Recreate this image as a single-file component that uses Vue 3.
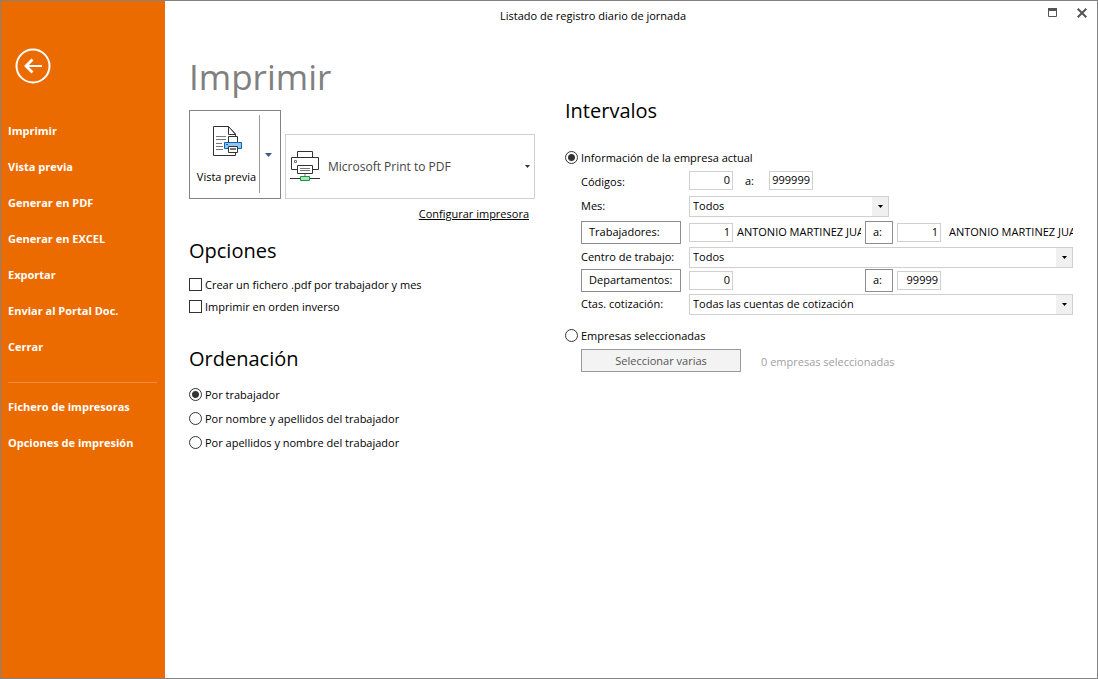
<script setup>
import { ref } from 'vue'

const mainMenu = ['Imprimir', 'Vista previa', 'Generar en PDF', 'Generar en EXCEL', 'Exportar', 'Enviar al Portal Doc.', 'Cerrar']
const extraMenu = ['Fichero de impresoras', 'Opciones de impresión']
const orders = ['Por trabajador', 'Por nombre y apellidos del trabajador', 'Por apellidos y nombre del trabajador']

const order = ref(0)
const scope = ref('actual')
const perWorkerPdf = ref(false)
const reverse = ref(false)
const codeFrom = ref('0')
const codeTo = ref('999999')
const workerFrom = ref('1')
const workerTo = ref('1')
const deptFrom = ref('0')
const deptTo = ref('99999')
</script>

<template>
  <div class="window">
    <nav class="sidebar">
      <button class="back" type="button" aria-label="Volver">
        <svg width="36" height="36" viewBox="0 0 36 36" fill="none" stroke="#fff">
          <circle cx="18" cy="18" r="16.5" stroke-width="2" />
          <path d="M27 18H11" stroke-width="2" />
          <path d="M17.500 11.500L11 18L17.500 24.500" stroke-width="2.8" />
        </svg>
      </button>
      <ul class="menu">
        <li v-for="m in mainMenu" :key="m"><a href="#">{{ m }}</a></li>
      </ul>
      <hr class="rule" />
      <ul class="menu">
        <li v-for="m in extraMenu" :key="m"><a href="#">{{ m }}</a></li>
      </ul>
    </nav>

    <div class="body">
      <header class="titlebar">
        <span class="caption">Listado de registro diario de jornada</span>
        <div class="winbuttons">
          <button type="button" aria-label="Maximizar">
            <svg width="9" height="9" viewBox="0 0 9 9"><path d="M.5 .5h8v8h-8z" fill="none" stroke="#555" /><path d="M0 0h9v3H0z" fill="#555" /></svg>
          </button>
          <button type="button" aria-label="Cerrar ventana">
            <svg width="10" height="10" viewBox="0 0 10 10"><path d="M.7 .7l8.600 8.600M9.300 .7L.7 9.300" stroke="#555" stroke-width="2" /></svg>
          </button>
        </div>
      </header>

      <main class="columns">
        <section class="left">
          <h1>Imprimir</h1>
          <div class="printrow">
            <div class="split">
              <button class="preview" type="button">
                <svg width="30" height="32" viewBox="0 0 30 32" fill="none">
                  <path d="M16.500 1.500h-15v29h22V9z" fill="#fff" stroke="#333" />
                  <path d="M16.500 1.500v8h7z" fill="#fff" stroke="#333" />
                  <path d="M4 11.500h10M4 14.500h10M4 18.500h6M4 21.500h7M4 24.500h7" stroke="#777" />
                  <path d="M16.500 11.500h9v7h-9z" fill="#fff" stroke="#333" />
                  <path d="M12.500 17.500h17v6h-17z" fill="#92c5f0" stroke="#0a63b0" />
                  <path d="M14 19.500h2" stroke="#0a63b0" />
                  <path d="M16.500 21.500h9v6h-9z" fill="#fff" stroke="#333" />
                  <path d="M18 24h6" stroke="#777" stroke-width="2" />
                </svg>
                <span>Vista previa</span>
              </button>
              <button class="drop" type="button" aria-label="Más opciones de vista previa">
                <svg width="7" height="4" viewBox="0 0 7 4"><path d="M0 0h7L3.500 4z" fill="#3f5a85" /></svg>
              </button>
            </div>
            <div class="printer">
              <svg class="printer-icon" width="30" height="32" viewBox="0 0 30 32" fill="none">
                <path d="M7.500 7.500v-6h15v6M7.500 19.500h-6v-12h27v12h-6" stroke="#333" />
                <path d="M4.500 10.500h2v2h-2z" stroke="#777" />
                <path d="M7.500 15.500h15v8h-15z" fill="#fff" stroke="#333" />
                <path d="M10 18.500h10M10 20.500h10M15 24v3" stroke="#777" />
                <path d="M0 28.500h30" stroke="#333" />
                <path d="M10.500 26.500h9v4h-9z" fill="#b5dfbf" stroke="#0f9a41" />
              </svg>
              <select aria-label="Impresora"><option>Microsoft Print to PDF</option></select>
              <svg class="printer-arrow" width="5" height="3" viewBox="0 0 5 3"><path d="M0 0h5L2.500 3z" fill="#333" /></svg>
            </div>
          </div>
          <a class="config" href="#">Configurar impresora</a>

          <h2 class="options-title">Opciones</h2>
          <div class="checks">
            <label><input v-model="perWorkerPdf" type="checkbox" />Crear un fichero .pdf por trabajador y mes</label>
            <label><input v-model="reverse" type="checkbox" />Imprimir en orden inverso</label>
          </div>

          <h2 class="order-title">Ordenación</h2>
          <div class="radios">
            <label v-for="(o, i) in orders" :key="o"><input v-model="order" type="radio" name="orden" :value="i" />{{ o }}</label>
          </div>
        </section>

        <section class="right">
          <h2>Intervalos</h2>
          <label class="scope"><input v-model="scope" type="radio" name="ambito" value="actual" />Información de la empresa actual</label>
          <div class="fields">
            <div class="field">
              <label for="code-from">Códigos:</label>
              <div class="codes">
                <input id="code-from" v-model="codeFrom" class="num" type="text" />
                <label for="code-to">a:</label>
                <input id="code-to" v-model="codeTo" class="num" type="text" />
              </div>
            </div>
            <div class="field">
              <label for="month">Mes:</label>
              <div class="combo short">
                <select id="month"><option>Todos</option></select>
                <span class="arrow"><svg width="5" height="3" viewBox="0 0 5 3"><path d="M0 0h5L2.500 3z" /></svg></span>
              </div>
            </div>
            <div class="field tall">
              <button type="button" class="box">Trabajadores:</button>
              <div class="range">
                <input v-model="workerFrom" class="num" type="text" aria-label="Trabajador inicial" />
                <span class="name">ANTONIO MARTINEZ JUAN</span>
                <button type="button" class="box to">a:</button>
                <input v-model="workerTo" class="num" type="text" aria-label="Trabajador final" />
                <span class="name last">ANTONIO MARTINEZ JUAN</span>
              </div>
            </div>
            <div class="field low">
              <label for="center">Centro de trabajo:</label>
              <div class="combo">
                <select id="center"><option>Todos</option></select>
                <span class="arrow"><svg width="5" height="3" viewBox="0 0 5 3"><path d="M0 0h5L2.500 3z" /></svg></span>
              </div>
            </div>
            <div class="field">
              <button type="button" class="box">Departamentos:</button>
              <div class="range">
                <input v-model="deptFrom" class="num" type="text" aria-label="Departamento inicial" />
                <span class="name"></span>
                <button type="button" class="box to">a:</button>
                <input v-model="deptTo" class="num" type="text" aria-label="Departamento final" />
                <span class="name last"></span>
              </div>
            </div>
            <div class="field">
              <label for="accounts">Ctas. cotización:</label>
              <div class="combo">
                <select id="accounts"><option>Todas las cuentas de cotización</option></select>
                <span class="arrow"><svg width="5" height="3" viewBox="0 0 5 3"><path d="M0 0h5L2.500 3z" /></svg></span>
              </div>
            </div>
          </div>
          <label class="scope second"><input v-model="scope" type="radio" name="ambito" value="varias" />Empresas seleccionadas</label>
          <div class="several">
            <button type="button" disabled>Seleccionar varias</button>
            <span>0 empresas seleccionadas</span>
          </div>
        </section>
      </main>
    </div>
  </div>
</template>

<style>
body { background: #fff; }
</style>

<style scoped>
.window, .window * { box-sizing: border-box; }
.window {
  display: flex;
  min-height: 100vh;
  border: 1px solid #838383;
  background: #fff;
  color: #000;
  font: 11px/16px "Open Sans", "Noto Sans", sans-serif;
}
button, input, select { font: inherit; color: inherit; margin: 0; }
button { padding: 0; background: none; border: 0; cursor: pointer; }
svg { display: block; }

.sidebar { flex: 0 0 164px; padding: 47px 8px 0 7px; background: #eb6b00; color: #fff; }
.back { display: block; margin-left: 7px; margin-bottom: 29px; }
.menu { list-style: none; margin: 0; padding: 0; }
.menu a { display: block; line-height: 36px; color: #fff; font-weight: 700; text-decoration: none; white-space: nowrap; }
.rule { height: 1px; margin: 17px 0 6px; border: 0; background: #f08c3a; }

.body { flex: 1; min-width: 0; }
.titlebar { display: flex; height: 30px; align-items: center; }
.caption { flex: 1; text-align: center; }
.winbuttons { display: flex; width: 76px; height: 30px; gap: 20px; padding: 7px 10px 0 27px; align-items: flex-start; }

.columns { display: flex; gap: 30px; padding: 0 24px; }
.left { flex: 0 0 346px; }
.right { flex: 1; min-width: 0; }
h1, h2 { margin: 0; font-weight: 400; }
h1 { padding-top: 18px; margin-bottom: 5px; font-size: 35px; line-height: 56px; color: #808080; }
h2 { font-size: 20px; line-height: 32px; }

.printrow { display: flex; gap: 4px; align-items: flex-end; }
.split { display: flex; width: 92px; height: 89px; border: 1px solid #838383; }
.preview { display: flex; flex: 1; flex-direction: column; align-items: center; justify-content: center; gap: 12px; padding-left: 4px; white-space: nowrap; }
.drop { display: flex; width: 21px; margin: 4px 0 5px; padding: 2px 4px 0 0; border-left: 1px solid #999; align-items: center; justify-content: center; }
.printer { position: relative; flex: 1; height: 65px; }
.printer select { width: 100%; height: 100%; padding: 0 20px 0 42px; appearance: none; border: 1px solid #d0d0d0; border-radius: 0; background: #fff; color: #444; font-size: 12px; }
.printer-icon { position: absolute; left: 5px; top: 16px; pointer-events: none; }
.printer-arrow { position: absolute; right: 5px; top: 31px; pointer-events: none; }
.config { display: block; margin-top: 5px; padding-right: 6px; text-align: right; line-height: 20px; color: #000; }

.options-title { margin-top: 11px; }
.checks { margin-top: 7px; }
.order-title { margin-top: 25px; }
.radios { margin-top: 8px; }
.checks label, .radios label, .scope { display: flex; height: 24px; gap: 3px; align-items: center; }
.checks label { height: 22px; }
input[type="checkbox"], input[type="radio"] { flex: none; width: 13px; height: 13px; margin-bottom: 2px; appearance: none; border: 1px solid #333; background: #fff; }
input[type="radio"] { border-radius: 50%; }
input[type="radio"]:checked { background: radial-gradient(circle, #333 0 3px, #fff 4px); }
input[type="checkbox"]:checked { background: #333; }

.right h2 { margin-top: 64px; }
.scope { margin-top: 19px; }
.second { margin-top: 8px; }
.fields { padding-left: 16px; }
.field { display: grid; grid-template-columns: 100px minmax(0, 1fr); column-gap: 8px; height: 24px; align-items: center; white-space: nowrap; }
.tall { height: 28px; }
.low { height: 22px; }
.num { flex: none; width: 44px; height: 19px; padding: 0 2px 2px 0; border: 1px solid #d0d0d0; text-align: right; }
.codes { display: grid; grid-template-columns: 44px 12px 44px; column-gap: 12px; align-items: center; padding-bottom: 3px; }
.combo { position: relative; height: 21px; }
.short { max-width: 200px; }
.combo select { display: block; width: 100%; height: 100%; padding: 0 20px 0 3px; appearance: none; border: 1px solid #d0d0d0; border-radius: 0; background: #fff; }
.arrow { position: absolute; top: 1px; right: 1px; bottom: 1px; display: flex; width: 16px; align-items: center; justify-content: center; background: #f0f0f0; pointer-events: none; }
.box { height: 23px; padding: 0 7px; border: 1px solid #8c8c8c; text-align: left; background: #fff; }
.to { flex: 0 0 28px; }
.range { display: flex; gap: 4px; align-items: center; }
.name { flex: 1 1 0; min-width: 0; overflow: hidden; }
.last { margin-left: 4px; }

.several { display: flex; gap: 20px; margin: 1px 0 0 16px; align-items: center; color: #a0a0a0; }
.several button { width: 160px; height: 23px; border: 1px solid #999; background: #f3f3f3; color: #555; }
.several span { padding-top: 2px; }
</style>
